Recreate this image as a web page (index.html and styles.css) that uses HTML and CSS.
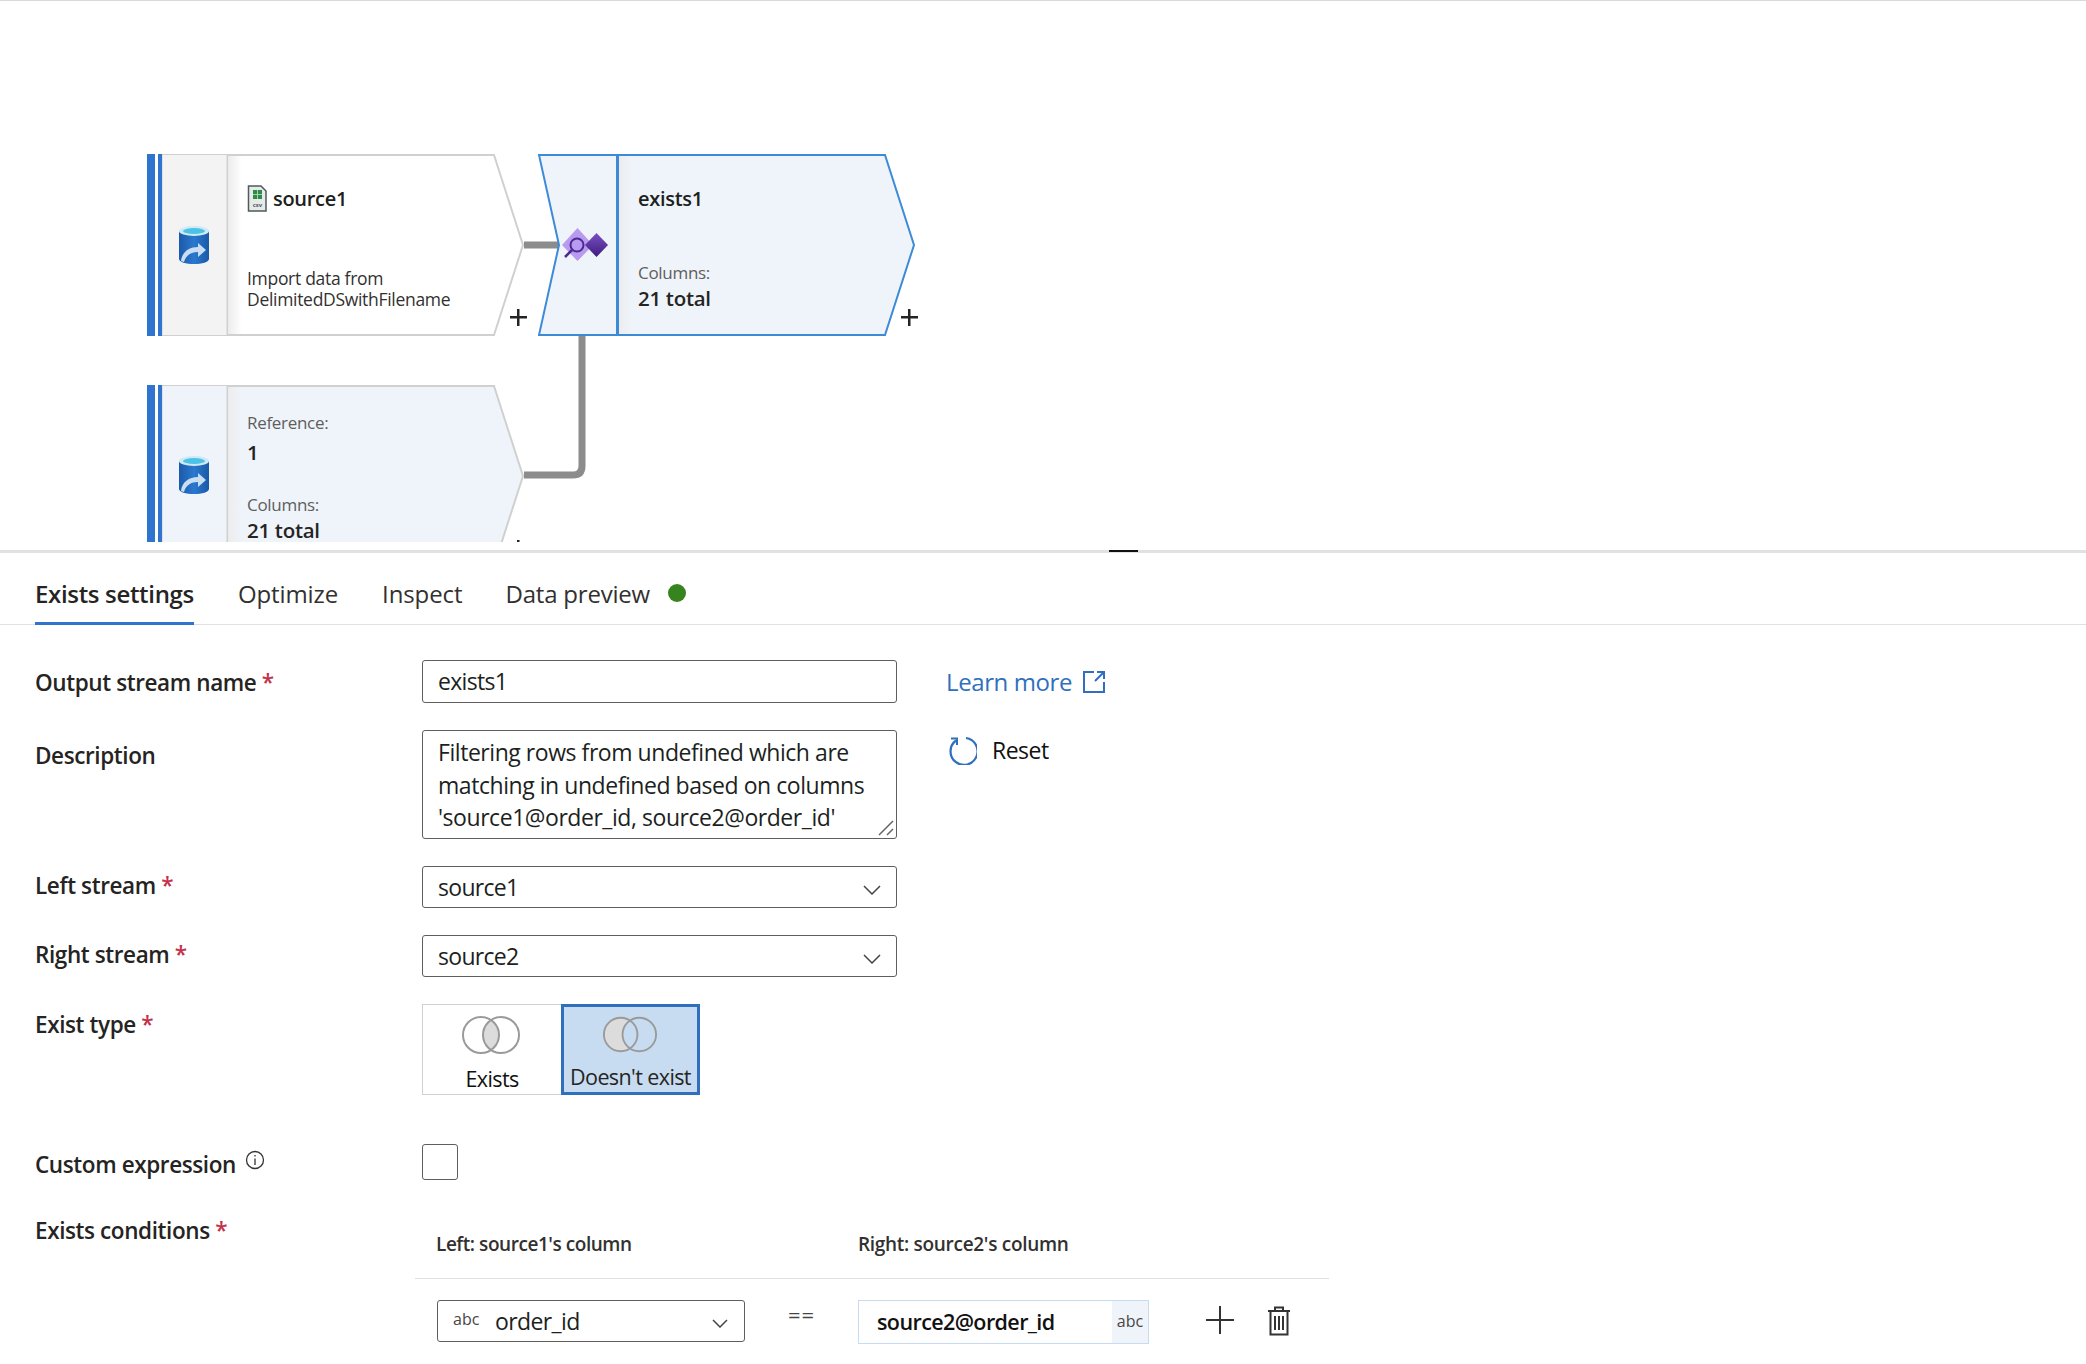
FILE: index.html
```html
<!doctype html>
<html lang="en">
<head>
    <meta charset="UTF-8" />
    <title>Exists settings</title>
    <link rel="stylesheet" href="styles.css">
</head>
<body>
    <div class="canvas">
        <svg class="wires" width="2086" height="542">
            <path d="M524 245H560" class="wire" />
            <path d="M582 336V466Q582 475 573 475H524" class="wire" />
        </svg>

        <div class="node node-source" style="left: 147px; top: 155px;">
            <svg class="node-shape" width="380" height="182">
                <defs>
                    <linearGradient id="fadeGrey" x1="0" x2="1" y1="0" y2="0">
                        <stop offset="0" stop-color="#ececec" />
                        <stop offset="1" stop-color="#ececec" stop-opacity="0" />
                    </linearGradient>
                </defs>
                <path d="M81 1H347L376 91L347 181H81Z" fill="#fff" stroke="#d0d0d0" stroke-width="2" />
                <rect x="81" y="2" width="14" height="178" fill="url(#fadeGrey)" />
                <rect x="15" y="0.5" width="65" height="181" fill="#f3f3f3" stroke="#d0d0d0" />
                <rect x="0" y="0" width="8" height="182" fill="#2f75d0" />
                <rect x="11" y="0" width="4" height="182" fill="#2f75d0" />
                <use href="#cylinder" x="32" y="72" />
            </svg>
            <div class="node-text">
                <div class="node-title">
                    <svg class="csv-icon" width="20" height="27" viewBox="0 0 20 27">
                        <path d="M1.5 1H14L19 6V26H1.5Z" fill="#e6eaea" stroke="#4f5a5a" stroke-width="1.5" />
                        <rect x="6" y="5" width="9" height="9" fill="#2e8b47" />
                        <path d="M6 9.500H15M10.500 5V14" stroke="#bfe3c8" stroke-width="0.8" />
                        <text x="10.500" y="22" class="csv-tag">csv</text>
                    </svg>
                    source1
                </div>
                <p class="node-desc">Import data from<br>DelimitedDSwithFilename</p>
            </div>
            <span class="node-plus"></span>
        </div>

        <div class="node node-exists" style="left: 538px; top: 155px;">
            <svg class="node-shape" width="380" height="182">
                <defs>
                    <linearGradient id="purpleDark" x1="0" x2="0" y1="0" y2="1">
                        <stop offset="0" stop-color="#7a4fc4" />
                        <stop offset="1" stop-color="#3f1d7e" />
                    </linearGradient>
                </defs>
                <path d="M80 1H347L376 91L347 181H80Z" fill="#eff4fb" stroke="#3d8ad8" stroke-width="2" />
                <rect x="81" y="2" width="12" height="178" fill="url(#fadeGrey)" />
                <path d="M1 1H79V181H1L21 91Z" fill="#eff4fb" stroke="#3d8ad8" stroke-width="2" />
                <path d="M39.500 74L55 91L39.500 107L24 91Z" fill="#b89af0" />
                <path d="M58.500 79L70 91L58.500 103L47 91Z" fill="url(#purpleDark)" />
                <circle cx="39" cy="91" r="6.500" fill="#b89af0" stroke="#4a2a91" stroke-width="2" />
                <path d="M34 96L27 103" stroke="#4a2a91" stroke-width="2.500" />
            </svg>
            <div class="node-text">
                <div class="node-title node-title-plain">exists1</div>
                <div class="node-key node-key-low">Columns:</div>
                <div class="node-value">21 total</div>
            </div>
            <span class="node-plus"></span>
        </div>

        <div class="node node-reference" style="left: 147px; top: 386px;">
            <svg class="node-shape" width="380" height="182">
                <path d="M81 1H347L376 91L347 181H81Z" fill="#eff4fb" stroke="#d0d0d0" stroke-width="2" />
                <rect x="81" y="2" width="14" height="178" fill="url(#fadeGrey)" />
                <rect x="15" y="0.5" width="65" height="181" fill="#eff4fb" stroke="#d0d0d0" />
                <rect x="0" y="0" width="8" height="182" fill="#2f75d0" />
                <rect x="11" y="0" width="4" height="182" fill="#2f75d0" />
                <use href="#cylinder" x="32" y="71" />
            </svg>
            <div class="node-text">
                <div class="node-key node-key-top">Reference:</div>
                <div class="node-value node-value-ref">1</div>
                <div class="node-key node-key-gap">Columns:</div>
                <div class="node-value">21 total</div>
            </div>
            <span class="node-plus"></span>
        </div>

        <svg class="icon-defs" width="0" height="0">
            <defs>
                <linearGradient id="cylBody" x1="0" x2="1" y1="0" y2="0">
                    <stop offset="0" stop-color="#1c5aa8" />
                    <stop offset="0.5" stop-color="#2a78cf" />
                    <stop offset="1" stop-color="#1a5aa6" />
                </linearGradient>
                <symbol id="cylinder" width="30" height="38" viewBox="0 0 30 38">
                    <path d="M0 5V33C0 36 7 38 15 38S30 36 30 33V5Z" fill="url(#cylBody)" />
                    <ellipse cx="15" cy="5" rx="15" ry="5" fill="#cfeaf5" />
                    <ellipse cx="15" cy="5" rx="11" ry="3" fill="#4cc3e6" />
                    <path d="M2 35C3 26 10 21 19 21V17L27 24L19 31V26C12 26 7 29 5 36Z" fill="#c9def3" />
                </symbol>
            </defs>
        </svg>
    </div>

    <div class="splitter"><span class="splitter-handle"></span></div>

    <div class="tabs">
        <a class="tab tab-active">Exists settings</a>
        <a class="tab">Optimize</a>
        <a class="tab">Inspect</a>
        <a class="tab tab-preview">Data preview <span class="status-dot"></span></a>
    </div>

    <div class="form">
        <div class="form-row">
            <label class="form-label label-output">Output stream name <span class="req">*</span></label>
            <div class="field field-text">exists1</div>
            <a class="learn-more">Learn more
                <svg width="22" height="22" viewBox="0 0 22 22" fill="none" stroke="#2f6fbd" stroke-width="2">
                    <path d="M11 1H1V21H21V11M12 10L21 1M14 1H21V8" />
                </svg>
            </a>
        </div>

        <div class="form-row">
            <label class="form-label label-desc">Description</label>
            <div class="field field-area">
                Filtering rows from undefined which are<br>
                matching in undefined based on columns<br>
                'source1@order_id, source2@order_id'
                <svg class="resize-grip" width="16" height="16" viewBox="0 0 16 16" stroke="#666" stroke-width="1.500">
                    <path d="M1 15L15 1M9 15L15 9" />
                </svg>
            </div>
            <a class="reset-btn">
                <svg width="30" height="30" viewBox="0 0 30 30" fill="none" stroke="#2f6fbd" stroke-width="2.200">
                    <path d="M9 5.500A13.500 13.500 0 1 0 19 3" />
                    <path d="M4 3.500H10V10" stroke-width="2" />
                </svg>
                Reset
            </a>
        </div>

        <div class="form-row">
            <label class="form-label label-select">Left stream <span class="req">*</span></label>
            <div class="field field-select">source1
                <svg class="chevron" width="18" height="10" viewBox="0 0 18 10" fill="none" stroke="#444" stroke-width="1.500">
                    <path d="M1 1L9 9L17 1" />
                </svg>
            </div>
        </div>

        <div class="form-row">
            <label class="form-label label-select">Right stream <span class="req">*</span></label>
            <div class="field field-select">source2
                <svg class="chevron" width="18" height="10" viewBox="0 0 18 10" fill="none" stroke="#444" stroke-width="1.500">
                    <path d="M1 1L9 9L17 1" />
                </svg>
            </div>
        </div>

        <div class="form-row">
            <label class="form-label">Exist type <span class="req">*</span></label>
            <div class="type-picker">
                <div class="type-option">
                    <svg width="60" height="44" viewBox="0 0 60 44" fill="none" stroke="#9a9a9a" stroke-width="2">
                        <path d="M30 7A18 18 0 0 1 30 37A18 18 0 0 1 30 7Z" fill="#dcdcdc" stroke="none" />
                        <circle cx="20" cy="22" r="18" />
                        <circle cx="40" cy="22" r="18" />
                    </svg>
                    <span>Exists</span>
                </div>
                <div class="type-option type-option-on">
                    <svg width="60" height="44" viewBox="0 0 60 44" fill="none" stroke="#9a9a9a" stroke-width="2">
                        <path d="M30 7A18 18 0 1 0 30 37A18 18 0 0 1 30 7Z" fill="#dcdcdc" stroke="none" />
                        <circle cx="20" cy="22" r="18" />
                        <circle cx="40" cy="22" r="18" />
                    </svg>
                    <span>Doesn't exist</span>
                </div>
            </div>
        </div>

        <div class="form-row form-row-custom">
            <label class="form-label">Custom expression
                <svg class="info-icon" width="20" height="20" viewBox="0 0 20 20" fill="none" stroke="#333" stroke-width="1.300">
                    <circle cx="10" cy="10" r="8.500" />
                    <path d="M10 8.500V15M10 5V6.500" />
                </svg>
            </label>
            <div class="checkbox"></div>
        </div>

        <div class="form-row">
            <label class="form-label label-conditions">Exists conditions <span class="req">*</span></label>
            <div class="conditions">
                <div class="cond-head">
                    <div class="cond-left">Left: source1's column</div>
                    <div class="cond-right">Right: source2's column</div>
                </div>
                <div class="cond-row">
                    <div class="cond-select">
                        <span class="type-tag">abc</span>
                        <span class="cond-value">order_id</span>
                        <svg class="chevron" width="16" height="9" viewBox="0 0 16 9" fill="none" stroke="#444" stroke-width="1.500">
                            <path d="M1 1L8 8L15 1" />
                        </svg>
                    </div>
                    <div class="cond-op">==</div>
                    <div class="cond-input">
                        <span class="cond-expr">source2@order_id</span>
                        <span class="cond-type">abc</span>
                    </div>
                    <svg class="cond-add" width="28" height="28" viewBox="0 0 28 28" stroke="#333" stroke-width="2">
                        <path d="M14 0V28M0 14H28" />
                    </svg>
                    <svg class="cond-del" width="24" height="30" viewBox="0 0 24 30" fill="none" stroke="#333" stroke-width="2">
                        <path d="M1 5H23M8 5V1.500H16V5M3.500 5V28.500H20.500V5M8 10V24M12 10V24M16 10V24" />
                    </svg>
                </div>
            </div>
        </div>
    </div>
</body>
</html>
```

FILE: styles.css
```css
* {
    box-sizing: border-box;
}

html, body {
    height: 100%;
}

body {
    font-family: "Open Sans", sans-serif;
    margin: 0;
    padding: 0;
    color: #201f1e;
    background: #fff;
    overflow: hidden;
}

/* diagram area */
.canvas {
    position: relative;
    height: 542px;
    margin-bottom: 8px;
    border-top: 1px solid #d9d9d9;
    overflow: hidden;
}

.wires {
    position: absolute;
    left: 0;
    top: -1px;
}

.wire {
    fill: none;
    stroke: #8c8c8c;
    stroke-width: 7px;
}

.icon-defs {
    position: absolute;
}

.node {
    position: absolute;
    width: 380px;
    height: 182px;
    margin-top: -2px;
}

.node-shape {
    position: absolute;
    left: 0;
    top: 0;
}

.node-text {
    position: relative;
    padding-left: 100px;
    font-size: 17px;
    letter-spacing: -0.3px;
}

.node-title {
    display: flex;
    align-items: center;
    gap: 6px;
    height: 28px;
    padding-top: 30px;
    box-sizing: content-box;
    font-size: 20px;
    font-weight: 600;
}

.csv-icon {
    flex: none;
}

.csv-tag {
    font-size: 6px;
    font-weight: 700;
    letter-spacing: 0;
    text-anchor: middle;
    fill: #4f5a5a;
}

.node-desc {
    margin: 56px 0 0;
    font-size: 17.5px;
    line-height: 21px;
    color: #323130;
}

.node-key {
    margin-bottom: -1px;
    font-size: 17px;
    line-height: 24px;
    color: #605e5c;
}

.node-key-low {
    margin-top: 49px;
}

.node-key-top {
    padding-top: 26px;
}

.node-key-gap {
    margin-top: 27px;
}

.node-value {
    font-size: 20.5px;
    font-weight: 600;
    line-height: 28px;
    color: #252423;
}

.node-value-ref {
    margin-top: 4px;
}

.node-plus {
    position: absolute;
    left: 363px;
    top: 155px;
    width: 17px;
    height: 17px;
    background:
        linear-gradient(#252423, #252423) center / 100% 2.5px no-repeat,
        linear-gradient(#252423, #252423) center / 2.5px 100% no-repeat;
}

/* divider between diagram and panel */
.splitter {
    position: relative;
    height: 3px;
    background: #e1e1e1;
}

.splitter-handle {
    position: absolute;
    left: 1109px;
    top: 0;
    width: 29px;
    height: 2px;
    background: #111;
}

/* tabs */
.tabs {
    display: flex;
    gap: 44px;
    height: 72px;
    padding-left: 35px;
    border-bottom: 1px solid #e1e1e1;
}

.tab {
    display: flex;
    align-items: center;
    gap: 18px;
    height: 72px;
    padding-top: 8px;
    font-size: 24px;
    letter-spacing: -0.1px;
    color: #323130;
}

.tab-active {
    padding-top: 11px;
    font-weight: 600;
    letter-spacing: -0.33px;
    color: #252423;
    border-bottom: 3px solid #2f75d0;
}

.tab-preview {
    margin-left: -1px;
    letter-spacing: -0.2px;
}

.status-dot {
    display: inline-block;
    width: 18px;
    height: 18px;
    border-radius: 50%;
    background: #37841f;
}

/* settings form */
.form {
    display: flex;
    flex-direction: column;
    gap: 27px;
    padding: 35px 0 0 35px;
}

.form-row {
    display: flex;
    align-items: flex-start;
}

.form-row-custom {
    margin-top: 22px;
}

.form-label {
    flex: none;
    width: 387px;
    padding-top: 5px;
    font-size: 22.5px;
    font-weight: 600;
    letter-spacing: -0.4px;
    color: #252423;
}

.label-output {
    padding-top: 7px;
}

.label-desc {
    padding-top: 10px;
}

.label-select {
    padding-top: 4px;
}

.label-conditions {
    padding-top: 8px;
}

.req {
    color: #c4314b;
}

.field {
    position: relative;
    flex: none;
    width: 475px;
    height: 43px;
    padding: 0 15px;
    border: 1px solid #605e5c;
    border-radius: 3px;
    font-size: 23px;
    line-height: 41px;
    letter-spacing: -0.7px;
    color: #201f1e;
}

.field-area {
    height: 109px;
    padding-top: 5px;
    line-height: 32.500px;
    letter-spacing: -0.45px;
}

.field-select {
    height: 42px;
    line-height: 40px;
}

.resize-grip {
    position: absolute;
    right: 2px;
    bottom: 2px;
}

.chevron {
    position: absolute;
    right: 15px;
    top: 18px;
}

.learn-more {
    display: flex;
    align-items: center;
    gap: 11px;
    margin-left: 49px;
    height: 43px;
    font-size: 24px;
    letter-spacing: -0.4px;
    color: #2f6fbd;
}

.reset-btn {
    display: flex;
    align-items: center;
    gap: 15px;
    margin: 5px 0 0 50px;
    height: 30px;
    font-size: 23px;
    letter-spacing: -0.5px;
    color: #111;
}

.type-picker {
    display: flex;
}

.type-option {
    display: flex;
    flex-direction: column;
    align-items: center;
    width: 139px;
    height: 91px;
    padding-top: 8px;
    border: 1px solid #d0d0d0;
    border-right: none;
    font-size: 21.5px;
    letter-spacing: -0.6px;
    color: #111;
}

.type-option svg {
    margin-left: -2px;
}

.type-option span {
    margin-top: 7px;
    line-height: 30px;
}

.type-option-on {
    padding-top: 7px;
    border: 3px solid #2f6fbd;
    background: #c7dcf0;
    color: #252423;
}

.type-option-on svg {
    margin-left: -2px;
}

.type-option-on span {
    margin-top: 7px;
}

.info-icon {
    margin-left: 4px;
    vertical-align: 3px;
}

.checkbox {
    width: 36px;
    height: 36px;
    border: 1px solid #605e5c;
    border-radius: 3px;
}

.conditions {
    width: 914px;
    margin-left: -7px;
}

.cond-head {
    display: flex;
    align-items: center;
    height: 72px;
    padding-top: 3px;
    border-bottom: 1px solid #e1e1e1;
    font-size: 19px;
    font-weight: 600;
    letter-spacing: -0.3px;
    color: #323130;
}

.cond-left {
    width: 443px;
    padding-left: 21px;
    letter-spacing: -0.45px;
}

.cond-row {
    display: flex;
    align-items: flex-start;
    margin-top: 21px;
    padding-left: 22px;
}

.cond-select {
    position: relative;
    display: flex;
    align-items: center;
    width: 308px;
    height: 42px;
    padding-left: 15px;
    border: 1px solid #605e5c;
    border-radius: 3px;
}

.cond-select .chevron {
    right: 16px;
}

.type-tag {
    width: 42px;
    padding-bottom: 4px;
    font-size: 16px;
    color: #484644;
}

.cond-value {
    font-size: 23px;
    letter-spacing: -0.6px;
}

.cond-op {
    width: 113px;
    padding-left: 43px;
    font-size: 22px;
    letter-spacing: 1px;
    line-height: 28px;
    color: #484644;
}

.cond-input {
    display: flex;
    align-items: stretch;
    width: 291px;
    height: 44px;
    border: 1px solid #c7dcf0;
}

.cond-expr {
    flex: 1;
    padding-left: 18px;
    font-size: 21.5px;
    font-weight: 600;
    line-height: 42px;
    letter-spacing: -0.6px;
    color: #111;
}

.cond-type {
    width: 36px;
    background: #eff4fb;
    font-size: 16px;
    line-height: 40px;
    text-align: center;
    color: #484644;
}

.cond-add {
    flex: none;
    margin: 6px 0 0 57px;
}

.cond-del {
    flex: none;
    margin: 6px 0 0 33px;
}
```
